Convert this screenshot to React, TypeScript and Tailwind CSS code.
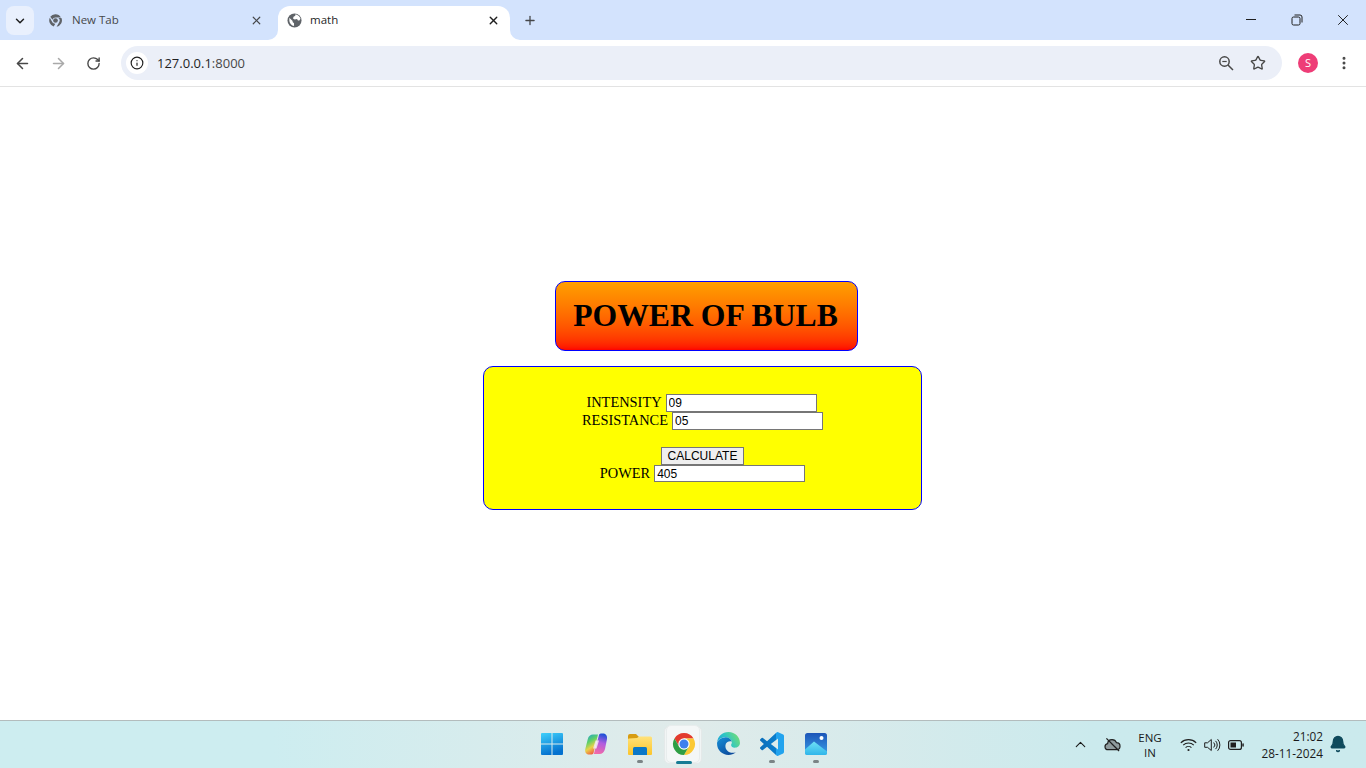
import type { ReactNode } from "react";
import { ChevronDown, X, Plus, ArrowLeft, ArrowRight, RotateCw, Info, Star, EllipsisVertical, ChevronUp, Bell } from "lucide-react";

const uiFont = "font-['Open_Sans','Noto_Sans',sans-serif]";

function ChromeMark({ size = 15 }: { size?: number }) {
  return (
    <svg width={size} height={size} viewBox="0 0 48 48">
      <path d="M24 4a20 20 0 0 1 17.3 10H24a10 10 0 0 0-9.6 7.2L7.2 12A20 20 0 0 1 24 4z" fill="#5f6368" />
      <path d="M43 16a20 20 0 0 1-15.5 27.7l8.6-15A10 10 0 0 0 33 16z" fill="#5f6368" />
      <path d="M5.800 15.500l8.600 14.900a10 10 0 0 0 9 3.600l-5.200 9.100A20 20 0 0 1 5.800 15.500z" fill="#5f6368" />
      <circle cx="24" cy="24" r="7.500" fill="#5f6368" />
    </svg>
  );
}

function GlobeMark() {
  return (
    <svg width="15" height="15" viewBox="0 0 16 16">
      <circle cx="8" cy="8" r="7.500" fill="#5f6368" />
      <path d="M2.500 5 6 8.500v1L7.500 11v2.800C5 13.500 2.800 11 2.500 8.500zM9 1.200 8.800 3 7 4l-.6 1.800 1.800 1 2.500-.3 1 1.500h1.500l1.200-1.800C14 4 12 1.800 9 1.200z" fill="#ffffff" />
    </svg>
  );
}

function TabFlare({ side }: { side: "left" | "right" }) {
  return (
    <svg
      width="10"
      height="10"
      viewBox="0 0 10 10"
      className={side === "left" ? "absolute bottom-0 -left-[10px]" : "absolute bottom-0 -right-[10px] -scale-x-100"}
    >
      <path d="M10 0v10H0a10 10 0 0 0 10-10z" fill="#ffffff" />
    </svg>
  );
}

function BrowserChrome() {
  return (
    <div className={`shrink-0 ${uiFont}`}>
      <div className="flex h-10 bg-[#d3e3fd]">
        <div className="ml-[6px] mt-[6px] flex h-[29px] w-[28px] items-center justify-center rounded-lg bg-[#e9f0fd]">
          <ChevronDown size={14} strokeWidth={2.500} className="text-[#1f1f1f]" />
        </div>
        <div className="ml-[14px] flex h-10 w-[214px] items-center text-[11.500px] text-[#45474a]">
          <ChromeMark />
          <span className="ml-[9px] flex-1">New Tab</span>
          <X size={13} strokeWidth={2.200} className="mr-[-1px] text-[#45474a]" />
        </div>
        <div className="relative ml-[16px] mt-[6px] flex h-[34px] w-[232px] items-center rounded-t-xl bg-white pb-[6px] pl-[9px] pr-[10px] text-[11.500px] text-[#1f1f1f]">
          <TabFlare side="left" />
          <GlobeMark />
          <span className="ml-2 flex-1">math</span>
          <X size={13} strokeWidth={2.500} className="text-[#1f1f1f]" />
          <TabFlare side="right" />
        </div>
        <div className="ml-[13px] flex h-10 w-[14px] items-center justify-center">
          <Plus size={15} strokeWidth={2.200} className="text-[#45474a]" />
        </div>
        <div className="ml-auto flex h-10 items-center text-[#1f1f1f]">
          <div className="flex w-[46px] justify-center">
            <svg width="10" height="2" viewBox="0 0 10 2"><rect width="10" height="1" fill="#1f1f1f" /></svg>
          </div>
          <div className="flex w-[46px] justify-center">
            <svg width="12" height="12" viewBox="0 0 12 12" fill="none" stroke="#1f1f1f" strokeWidth="1">
              <rect x="1" y="3" width="8" height="8" rx="1.500" />
              <path d="M3.500 1h5.500a2 2 0 0 1 2 2v5.500" />
            </svg>
          </div>
          <div className="flex w-[46px] justify-center"><X size={18} strokeWidth={1.300} /></div>
        </div>
      </div>
      <div className="flex h-[47px] items-center rounded-tl-lg rounded-tr-lg border-b border-[#e3e3e3] bg-white">
        <div className="flex w-[121px] items-center pl-[14px]">
          <ArrowLeft size={17} strokeWidth={2.200} className="text-[#474747]" />
          <ArrowRight size={17} strokeWidth={2.200} className="ml-[19px] text-[#a9a9a9]" />
          <RotateCw size={15} strokeWidth={2.200} className="ml-[19px] text-[#474747]" />
        </div>
        <div className="flex h-[34px] w-[1161px] items-center rounded-full bg-[#ebeff8] pl-[5px] pr-[16px]">
          <div className="flex h-[22px] w-[22px] items-center justify-center rounded-full bg-white">
            <Info size={14} strokeWidth={2} className="text-[#1f1f1f]" />
          </div>
          <span className="ml-[9px] flex-1 pt-[1px] text-[13px] text-[#1f1f1f]">127.0.0.1<span className="text-[#474747]">:8000</span></span>
          <svg width="16" height="16" viewBox="0 0 16 16" fill="none" stroke="#474747" strokeWidth="1.500">
            <circle cx="6.500" cy="6.500" r="4.700" />
            <path d="M10 10l5 5" />
            <path d="M4.300 6.500h4.400" strokeWidth="1.200" />
          </svg>
          <Star size={16} strokeWidth={2} className="ml-4 text-[#474747]" />
        </div>
        <div className="ml-[16px] flex h-5 w-5 items-center justify-center rounded-full bg-[#ee3d77] text-[11px] text-white">S</div>
        <EllipsisVertical size={16} strokeWidth={2.500} className="ml-[18px] text-[#474747]" />
      </div>
    </div>
  );
}

function PowerForm() {
  const inputClass = "h-[18px] w-[151px] border border-[#767676] bg-white pl-[2px] font-['Liberation_Sans',sans-serif] text-[12px] leading-none text-black";
  return (
    <main className="flex flex-1 flex-col items-start bg-white pl-[483px] pt-[194px] font-['Liberation_Serif',serif] text-black">
      <h1 className="ml-[72px] flex h-[70px] w-[303px] items-center justify-center rounded-[10px] border border-[#0000ff] bg-gradient-to-b from-[#ff9f00] to-[#ff0000] pr-[2px] text-[31.700px] font-bold">
        POWER OF BULB
      </h1>
      <form className="mt-[15px] h-[144px] w-[439px] rounded-[10px] border border-[#0000ff] bg-[#ffff00] pt-[27px] text-center text-[14.400px]">
        <div className="flex h-[18px] items-center justify-center gap-1 pr-[2px]">
          <label>INTENSITY</label>
          <input className={inputClass} defaultValue="09" />
        </div>
        <div className="flex h-[18px] items-center justify-center gap-1">
          <label>RESISTANCE</label>
          <input className={inputClass} defaultValue="05" />
        </div>
        <div className="mt-[17px] flex h-[18px] justify-center">
          <button type="button" className="h-[18px] w-[83px] border border-[#767676] bg-[#efefef] font-['Liberation_Sans',sans-serif] text-[12px] leading-none">
            CALCULATE
          </button>
        </div>
        <div className="flex h-[17px] items-center justify-center gap-1">
          <label>POWER</label>
          <input className={`${inputClass} !h-[17px]`} defaultValue="405" />
        </div>
      </form>
    </main>
  );
}

function WindowsLogo() {
  return (
    <svg width="24" height="24" viewBox="0 0 24 24">
      <defs>
        <linearGradient id="winBlue" x1="0" y1="0" x2="0.300" y2="1">
          <stop offset="0" stopColor="#3fd0fb" />
          <stop offset="1" stopColor="#0471cf" />
        </linearGradient>
      </defs>
      <path d="M1 2a1 1 0 0 1 1-1h9.500v10.500H1zM12.500 1H22a1 1 0 0 1 1 1v9.500H12.500zM1 12.500h10.500V23H2a1 1 0 0 1-1-1zM12.500 12.500H23V22a1 1 0 0 1-1 1h-9.500z" fill="url(#winBlue)" />
    </svg>
  );
}

function CopilotLogo() {
  return (
    <svg width="24" height="24" viewBox="0 0 24 24">
      <defs>
        <linearGradient id="copA" x1="0.200" y1="0" x2="0.600" y2="1">
          <stop offset="0" stopColor="#20a6c8" />
          <stop offset="0.350" stopColor="#5fd068" />
          <stop offset="0.650" stopColor="#e9d24a" />
          <stop offset="1" stopColor="#f2503f" />
        </linearGradient>
        <linearGradient id="copB" x1="0.600" y1="0" x2="0.400" y2="1">
          <stop offset="0" stopColor="#1a4fd6" />
          <stop offset="0.450" stopColor="#b05ce0" />
          <stop offset="1" stopColor="#f26aa8" />
        </linearGradient>
      </defs>
      <path d="M9 2.500h5L9.500 21c-.4 1-1.500 1.500-3 1.500H5C2 22.500.7 20 1.300 17L3.800 7C4.500 4 6.500 2.500 9 2.500z" fill="url(#copA)" />
      <path d="M10 21.500 15 3c.3-1 1.200-1.500 2.500-1.500H19c3 0 4.500 2.700 4 5.500L21 17c-.6 3-3 5-5.500 5H10z" fill="url(#copB)" />
      <path d="M11.500 8.500H15l-2.500 8H9z" fill="#f6eef8" fillOpacity="0.800" />
    </svg>
  );
}

function FolderLogo() {
  return (
    <svg width="24" height="24" viewBox="0 0 24 24">
      <defs>
        <linearGradient id="folderBody" x1="0" y1="0" x2="0" y2="1">
          <stop offset="0" stopColor="#ffe27a" />
          <stop offset="1" stopColor="#fcc52a" />
        </linearGradient>
      </defs>
      <path d="M0 4a2 2 0 0 1 2-2h6l3 3v3H0z" fill="#d79c12" />
      <path d="M0 22V7.500a1 1 0 0 1 1-1l8-.5 2-1.500h11.500a1.500 1.500 0 0 1 1.500 1.500v16a1 1 0 0 1-1 1H1a1 1 0 0 1-1-1z" fill="url(#folderBody)" />
      <path d="M5 16.500a1.500 1.500 0 0 1 1.500-1.500h11a1.500 1.500 0 0 1 1.500 1.500V23H5z" fill="#0a78c8" />
    </svg>
  );
}

function ChromeLogo() {
  return (
    <svg width="24" height="24" viewBox="0 0 24 24">
      <path d="M2.470 6.500A11 11 0 0 1 21.530 6.500H12L7.240 14.750z" fill="#e33b2e" />
      <path d="M21.530 6.500A11 11 0 0 1 12 23L16.760 14.750 12 6.500z" fill="#fbc934" />
      <path d="M12 23A11 11 0 0 1 2.470 6.500L7.240 14.750 16.760 14.750z" fill="#2f9e44" />
      <circle cx="12" cy="12" r="5.700" fill="#ffffff" />
      <circle cx="12" cy="12" r="4.500" fill="#3f7fee" />
    </svg>
  );
}

function EdgeLogo() {
  return (
    <svg width="25" height="25" viewBox="0 0 24 24">
      <defs>
        <linearGradient id="edgeTop" x1="0" y1="0.800" x2="1" y2="0.400">
          <stop offset="0" stopColor="#1a9fdc" />
          <stop offset="0.500" stopColor="#2fc6c4" />
          <stop offset="1" stopColor="#6fdc7a" />
        </linearGradient>
        <linearGradient id="edgeLow" x1="0" y1="0" x2="0.700" y2="1">
          <stop offset="0" stopColor="#1590d8" />
          <stop offset="1" stopColor="#0c4a9c" />
        </linearGradient>
      </defs>
      <path d="M1 11.500C1.500 5 6 1 12 1c6.500 0 11 5 11 10.500 0 3-2.500 4.500-5 4.500-2 0-3.500-1-3.500-2.500 0-.8.700-1.200.700-2.500C15.200 8 12 6 9 6c-4 0-7.500 2.500-8 5.500z" fill="url(#edgeTop)" />
      <path d="M9.500 6C5 6 1 9 1 12c0 6.500 5 11 11 11 2.500 0 5-.8 7-2.500-3 1-6.500.5-8.500-2C8.500 16 8.500 12 11 10.500c1-.6 3-1 4.200-.3C14.200 7.500 12 6 9.500 6z" fill="url(#edgeLow)" />
    </svg>
  );
}

function VsCodeLogo() {
  return (
    <svg width="24" height="24" viewBox="0 0 24 24">
      <defs>
        <linearGradient id="vsBlue" x1="0" y1="0" x2="1" y2="0">
          <stop offset="0" stopColor="#0b6fbb" />
          <stop offset="0.650" stopColor="#0a7dcc" />
          <stop offset="0.660" stopColor="#22a3ee" />
          <stop offset="1" stopColor="#22a3ee" />
        </linearGradient>
      </defs>
      <path
        fill="url(#vsBlue)"
        d="M23.150 2.587L18.210.21a1.494 1.494 0 0 0-1.705.29l-9.460 8.630-4.120-3.128a.999.999 0 0 0-1.276.057L.327 7.261A1 1 0 0 0 .326 8.740L3.899 12 .326 15.260a1 1 0 0 0 .001 1.479L1.650 17.940a.999.999 0 0 0 1.276.057l4.120-3.128 9.460 8.630a1.492 1.492 0 0 0 1.704.29l4.942-2.377A1.500 1.500 0 0 0 24 20.060V3.939a1.500 1.500 0 0 0-.85-1.352zm-5.146 14.861L10.826 12l7.178-5.448v10.896z"
      />
    </svg>
  );
}

function PhotosLogo() {
  return (
    <svg width="24" height="24" viewBox="0 0 24 24">
      <defs>
        <linearGradient id="photoBg" x1="0" y1="0" x2="0" y2="1">
          <stop offset="0" stopColor="#1c55b8" />
          <stop offset="1" stopColor="#3aa0e8" />
        </linearGradient>
        <linearGradient id="photoHill" x1="0" y1="0" x2="0" y2="1">
          <stop offset="0" stopColor="#6fe0f5" />
          <stop offset="1" stopColor="#2fb6ea" />
        </linearGradient>
      </defs>
      <rect x="1" y="1" width="22" height="22" rx="2.500" fill="url(#photoBg)" />
      <circle cx="17.500" cy="6" r="2" fill="#ffffff" />
      <path d="M1 17.500 10 9.500l13 10V21a2 2 0 0 1-2 2H3.500a2.500 2.500 0 0 1-2.500-2.500z" fill="url(#photoHill)" />
    </svg>
  );
}

function AppSlot({ children, dot, active }: { children: ReactNode; dot?: boolean; active?: boolean }) {
  return (
    <div className="relative flex h-[47px] w-[44px] items-center justify-center pb-[2px]">
      {active ? (
        <>
          <div className="absolute left-[2px] top-[5px] h-[38px] w-[38px] rounded-[5px] border border-[#e4e9e9] bg-[#f1f5f5]" />
          <div className="absolute left-[4px] top-[4px] h-[38px] w-[34px] rounded-[5px] border border-[#e8eded] bg-[#f4f7f7]" />
        </>
      ) : null}
      <div className="relative flex">{children}</div>
      {dot ? <div className="absolute bottom-[5px] left-[19px] h-[3px] w-[6px] rounded-full bg-[#7b8486]" /> : null}
      {active ? <div className="absolute bottom-[4px] left-[14px] h-[3px] w-[16px] rounded-full bg-[#167c94]" /> : null}
    </div>
  );
}

function Taskbar() {
  return (
    <footer className={`flex h-12 shrink-0 items-center border-t border-[#b3bcbd] bg-gradient-to-r from-[#cdedf0] from-20% via-[#e0ebea] via-50% to-[#cbeaed] to-80% text-[#1a1a1a] ${uiFont}`}>
      <div className="ml-[530px] flex items-center">
        <AppSlot><WindowsLogo /></AppSlot>
        <AppSlot><CopilotLogo /></AppSlot>
        <AppSlot dot><FolderLogo /></AppSlot>
        <AppSlot active><ChromeLogo /></AppSlot>
        <AppSlot><EdgeLogo /></AppSlot>
        <AppSlot dot><VsCodeLogo /></AppSlot>
        <AppSlot dot><PhotosLogo /></AppSlot>
      </div>
      <div className="ml-auto mr-[13px] flex items-center">
        <div className="flex w-[28px] justify-center"><ChevronUp size={17} strokeWidth={1.500} /></div>
        <div className="flex w-[36px] justify-center">
          <svg width="17" height="15" viewBox="0 0 18 16">
            <path d="M4.500 13.500C2.300 13.500 1 12 1 10.300 1 8.600 2.200 7.300 3.800 7 4 4.600 6 2.800 8.500 2.800c2.300 0 4 1.300 4.700 3.200 2.200 0 3.800 1.700 3.800 3.800 0 2-1.500 3.700-3.700 3.700z" fill="#8f9b9d" stroke="#1f1f1f" strokeWidth="1.300" />
            <path d="M2.500 1.500 16 15" stroke="#1f1f1f" strokeWidth="1.400" />
          </svg>
        </div>
        <div className="flex w-[40px] flex-col items-center text-[11.500px] leading-[15px]">
          <span>ENG</span>
          <span>IN</span>
        </div>
        <div className="ml-[6px] flex w-[24px] justify-center">
          <svg width="17" height="14" viewBox="0 0 17 14" fill="none" stroke="#1f1f1f" strokeWidth="1.100">
            <path d="M.800 4.800a11 11 0 0 1 15.400 0" />
            <path d="M3.200 7.200a7.600 7.600 0 0 1 10.600 0" />
            <path d="M5.600 9.600a4.200 4.200 0 0 1 5.800 0" />
            <circle cx="8.500" cy="12" r="1.100" fill="#1f1f1f" stroke="none" />
          </svg>
        </div>
        <div className="flex w-[24px] justify-center">
          <svg width="17" height="14" viewBox="0 0 17 14" fill="none" stroke="#1f1f1f" strokeWidth="1">
            <path d="M.700 4.800h2.800L7.300 1.500v11L3.500 9.300H.700z" />
            <path d="M9.700 4.500a3.500 3.500 0 0 1 0 5" />
            <path d="M11.600 2.900a6 6 0 0 1 0 8.200" />
            <path d="M13.600 1.200a8.500 8.500 0 0 1 0 11.600" />
          </svg>
        </div>
        <div className="flex w-[24px] justify-center">
          <svg width="16" height="10" viewBox="0 0 16 10">
            <rect x="0.600" y="0.600" width="12.800" height="8.800" rx="2" fill="none" stroke="#1f1f1f" strokeWidth="1.200" />
            <rect x="2.500" y="2.500" width="5.500" height="5" fill="#1f1f1f" />
            <rect x="14.300" y="3.200" width="1.500" height="3.600" rx="0.700" fill="#1f1f1f" />
          </svg>
        </div>
        <div className="flex w-[75px] flex-col items-end text-[11.800px] leading-[17px]">
          <span>21:02</span>
          <span>28-11-2024</span>
        </div>
        <div className="flex w-[30px] justify-center pb-[1px]">
          <Bell size={18} fill="#0f4a5c" className="text-[#0f4a5c]" />
        </div>
      </div>
    </footer>
  );
}

export default function App() {
  return (
    <div className="flex h-screen flex-col overflow-hidden bg-white">
      <BrowserChrome />
      <PowerForm />
      <Taskbar />
    </div>
  );
}
